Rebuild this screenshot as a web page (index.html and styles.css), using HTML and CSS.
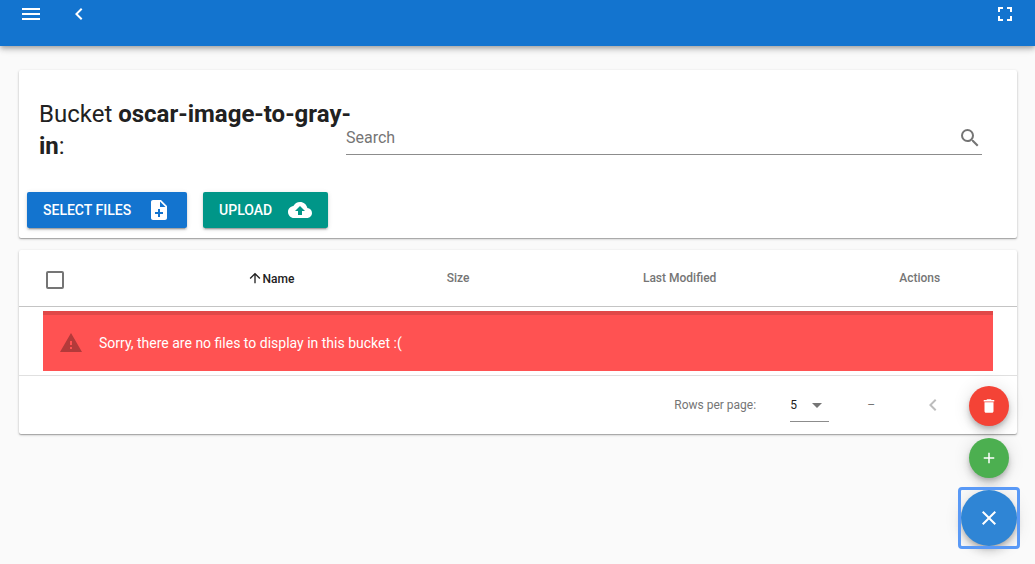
FILE: index.html
```html
<!DOCTYPE html>
<html lang="en">
<head>
<meta charset="utf-8">
<meta name="viewport" content="width=device-width, initial-scale=1">
<title>Bucket oscar-image-to-gray-in</title>
<link rel="stylesheet" href="styles.css">
</head>
<body>
<header class="toolbar">
  <button class="icon-btn" type="button" aria-label="Menu"><svg class="icon" viewBox="0 0 24 24"><path d="M3 6h18v2H3V6m0 5h18v2H3v-2m0 5h18v2H3v-2z"/></svg></button>
  <button class="icon-btn" type="button" aria-label="Back"><svg class="icon" viewBox="0 0 24 24"><path d="M15.41 7.41L14 6l-6 6 6 6 1.41-1.41L10.83 12z"/></svg></button>
  <button class="icon-btn toolbar-end" type="button" aria-label="Full screen"><svg class="icon" viewBox="0 0 24 24"><path d="M7 14H5v5h5v-2H7v-3zm-2-4h2V7h3V5H5v5zm12 7h-3v2h5v-5h-2v3zM14 5v2h3v3h2V5h-5z"/></svg></button>
</header>

<main class="content">
  <section class="card">
    <div class="card-head">
      <h1 class="title">Bucket <b>oscar-image-to-gray-in</b>:</h1>
      <label class="search">
        <input class="search-input" type="text" placeholder="Search" aria-label="Search">
        <svg class="icon" viewBox="0 0 24 24"><path d="M15.5 14h-.79l-.28-.27A6.47 6.47 0 0 0 16 9.5 6.5 6.5 0 1 0 9.5 16c1.61 0 3.09-.59 4.23-1.57l.27.28v.79l5 4.99L20.49 19l-4.99-5zm-6 0C7.01 14 5 11.99 5 9.5S7.01 5 9.5 5 14 7.01 14 9.5 11.99 14 9.5 14z"/></svg>
      </label>
    </div>
    <div class="actions">
      <button class="btn btn-select" type="button">SELECT FILES
        <svg class="icon" viewBox="0 0 24 24"><path d="M14 2H6c-1.1 0-2 .9-2 2v16c0 1.1.9 2 2 2h12c1.1 0 2-.9 2-2V8l-6-6zm2 14h-3v3h-2v-3H8v-2h3v-3h2v3h3v2zm-3-7V3.5L18.5 9H13z"/></svg>
      </button>
      <button class="btn btn-upload" type="button">UPLOAD
        <svg class="icon" viewBox="0 0 24 24"><path d="M19.35 10.04C18.67 6.59 15.64 4 12 4 9.11 4 6.6 5.64 5.35 8.04 2.34 8.36 0 10.91 0 14c0 3.31 2.69 6 6 6h13c2.76 0 5-2.24 5-5 0-2.64-2.05-4.78-4.65-4.96zM14 13v4h-4v-4H7l5-5 5 5h-3z"/></svg>
      </button>
    </div>
  </section>

  <section class="card">
    <table class="files">
      <colgroup><col class="col-check"><col class="col-name"><col class="col-size"><col class="col-date"><col class="col-actions"></colgroup>
      <thead>
        <tr>
          <th class="cell-check"><input class="check" type="checkbox" aria-label="Select all"></th>
          <th class="sorted"><svg class="sort-icon" viewBox="0 0 24 24"><path d="M4 12l1.41 1.41L11 7.83V20h2V7.83l5.58 5.59L20 12l-8-8-8 8z"/></svg>Name</th>
          <th>Size</th>
          <th>Last Modified</th>
          <th>Actions</th>
        </tr>
      </thead>
      <tbody>
        <tr>
          <td class="cell-alert" colspan="5">
            <div class="alert" role="alert">
              <svg class="icon alert-icon" viewBox="0 0 24 24"><path d="M1 21h22L12 2 1 21zm12-3h-2v-2h2v2zm0-4h-2v-4h2v4z"/></svg>
              <span>Sorry, there are no files to display in this bucket :(</span>
            </div>
          </td>
        </tr>
      </tbody>
    </table>
    <div class="pager">
      <label for="rows">Rows per page:</label>
      <span class="select-wrap">
        <select class="rows" id="rows"><option>5</option><option>10</option><option>25</option></select>
        <svg class="icon caret" viewBox="0 0 24 24"><path d="M7 10l5 5 5-5z"/></svg>
      </span>
      <span class="range">–</span>
      <button class="icon-btn page-btn" type="button" aria-label="Previous page" disabled><svg class="icon" viewBox="0 0 24 24"><path d="M15.41 7.41L14 6l-6 6 6 6 1.41-1.41L10.83 12z"/></svg></button>
    </div>
  </section>
</main>

<div class="speed-dial">
  <button class="fab fab-delete" type="button" aria-label="Delete"><svg class="icon-small" viewBox="0 0 24 24"><path d="M6 19c0 1.1.9 2 2 2h8c1.1 0 2-.9 2-2V7H6v12zM19 4h-3.500l-1-1h-5l-1 1H5v2h14V4z"/></svg></button>
  <button class="fab fab-add" type="button" aria-label="Add"><svg class="icon-small" viewBox="0 0 24 24"><path d="M19 13h-6v6h-2v-6H5v-2h6V5h2v6h6v2z"/></svg></button>
  <div class="focus-ring">
    <button class="fab fab-main" type="button" aria-label="Close"><svg class="icon" viewBox="0 0 24 24"><path d="M19 6.41L17.59 5 12 10.59 6.41 5 5 6.41 10.59 12 5 17.59 6.41 19 12 13.41 17.59 19 19 17.59 13.41 12z"/></svg></button>
  </div>
</div>
</body>
</html>
```
FILE: styles.css
```css
* { box-sizing: border-box; }

body {
  margin: 0;
  background: #fafafa;
  color: #212121;
  font-family: Roboto, "Liberation Sans", sans-serif;
  font-size: 14px;
}

button {
  border: 0;
  padding: 0;
  font: inherit;
  color: inherit;
}

.icon {
  display: block;
  flex: none;
  width: 24px;
  height: 24px;
  fill: currentColor;
}

.icon-small {
  display: block;
  width: 18px;
  height: 18px;
  fill: currentColor;
}

.icon-btn {
  display: block;
  background: none;
}

.toolbar {
  display: flex;
  gap: 24px;
  padding: 2px 18px 20px 19px;
  background: #1374cf;
  color: #fff;
  box-shadow: 0 2px 4px -1px rgba(0, 0, 0, .2), 0 4px 5px rgba(0, 0, 0, .14), 0 1px 10px rgba(0, 0, 0, .12);
}

.toolbar-end { margin-left: auto; }

.content {
  display: grid;
  gap: 12px;
  padding: 24px 18px 24px 19px;
}

.card {
  min-width: 0;
  background: #fff;
  border-radius: 2px;
  box-shadow: 0 1px 1px rgba(0, 0, 0, .24), 0 1px 3px rgba(0, 0, 0, .2);
}

.card-head {
  display: grid;
  grid-template-columns: 307px 1fr;
  align-items: end;
  padding: 28px 35px 22px 20px;
}

.title {
  margin: 0 -8px 8px 0;
  font-size: 24px;
  font-weight: 400;
  line-height: 32px;
}

.title b { font-weight: 700; }

.search {
  display: flex;
  align-items: end;
  margin-bottom: 15px;
  padding-bottom: 4px;
  border-bottom: 1px solid #8c8c8c;
  color: #757575;
}

.search-input {
  flex: 1;
  min-width: 0;
  height: 26px;
  padding: 0;
  border: 0;
  outline: 0;
  background: none;
  color: #212121;
  font: 16px Roboto, "Liberation Sans", sans-serif;
}

.search-input::placeholder { color: #757575; }

.actions {
  display: flex;
  gap: 16px;
  padding: 0 8px 10px;
}

.btn {
  display: flex;
  align-items: center;
  gap: 16px;
  height: 36px;
  padding: 0 16px;
  border-radius: 2px;
  color: #fff;
  font-weight: 500;
  box-shadow: 0 3px 1px -2px rgba(0, 0, 0, .2), 0 2px 2px rgba(0, 0, 0, .14), 0 1px 5px rgba(0, 0, 0, .12);
}

.btn-select { background: #1374cf; }
.btn-upload { background: #009688; }

.files {
  width: 100%;
  table-layout: fixed;
  border-collapse: collapse;
}

.col-check { width: 14.3%; }
.col-name { width: 21.8%; }
.col-size { width: 15.8%; }
.col-date { width: 28.6%; }
.col-actions { width: 19.5%; }

.files th {
  height: 56px;
  padding: 0;
  border-bottom: 1px solid #c4c4c4;
  color: #757575;
  font-size: 12px;
  font-weight: 500;
}

.files .sorted { color: #212121; }

.sort-icon {
  width: 16px;
  height: 16px;
  vertical-align: -3px;
  fill: currentColor;
}

.files .cell-check {
  padding: 4px 0 0 27px;
  text-align: left;
}

.check {
  appearance: none;
  display: block;
  width: 18px;
  height: 18px;
  margin: 0;
  border: 2px solid #757575;
  border-radius: 2px;
}

.cell-alert {
  padding: 4px 24px;
  border-bottom: 1px solid #e0e0e0;
}

.alert {
  display: flex;
  align-items: center;
  gap: 16px;
  height: 60px;
  padding: 0 16px;
  border-top: 4px solid #e04848;
  background: #ff5252;
  color: #fff;
}

.alert-icon { color: #b33a3a; }

.pager {
  display: flex;
  align-items: center;
  justify-content: flex-end;
  height: 58px;
  padding-right: 72px;
  color: #757575;
  font-size: 12px;
}

.select-wrap {
  display: grid;
  align-items: center;
  width: 39px;
  margin-left: 34px;
  padding-top: 1px;
  border-bottom: 1px solid #8c8c8c;
}

.rows, .caret { grid-area: 1 / 1; }

.rows {
  appearance: none;
  width: 100%;
  height: 32px;
  padding: 0;
  border: 0;
  background: none;
  color: #212121;
  font: 12px Roboto, "Liberation Sans", sans-serif;
}

.caret {
  justify-self: end;
  pointer-events: none;
}

.range { margin: 0 46px 0 38px; }

.page-btn { color: #bdbdbd; }

.speed-dial {
  position: fixed;
  right: 18px;
  bottom: 18px;
  display: flex;
  flex-direction: column;
  align-items: center;
  gap: 12px;
}

.fab {
  display: grid;
  place-items: center;
  width: 40px;
  height: 40px;
  border-radius: 50%;
  color: #fff;
  box-shadow: 0 3px 5px -1px rgba(0, 0, 0, .2), 0 6px 10px rgba(0, 0, 0, .14), 0 1px 18px rgba(0, 0, 0, .12);
}

.fab-delete { background: #f44336; }
.fab-add { background: #4caf50; }

.fab-main {
  width: 56px;
  height: 56px;
  background: #2f85d5;
}

.focus-ring {
  border-radius: 1px;
  outline: 3px solid #5999f6;
}
```
